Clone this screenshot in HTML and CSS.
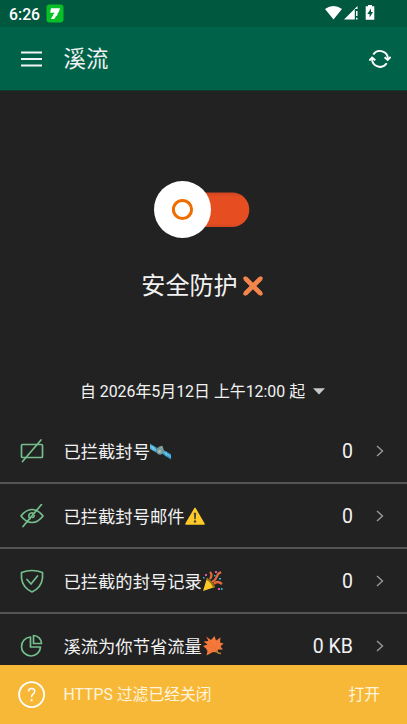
FILE: index.html
```
<!DOCTYPE html>
<html lang="zh-CN">
<head>
<meta charset="utf-8">
<title>溪流</title>
<link rel="stylesheet" href="styles.css">
</head>
<body>
<div class="app">
  <div class="status">
    <span class="clock">6:26</span>
    <svg class="badge" width="18" height="19" viewBox="0 0 18 19"><rect x=".5" y=".5" width="17" height="18" rx="3" fill="#08bf27"/><path d="M5 4.300H14L13.200 7L8.300 15H4.800L8.600 8.800H4.200Z" fill="#fff"/><path d="M7.600 10h4l-.6 1.800H6.800z" fill="#fff"/></svg>
    <svg class="sys" width="52" height="17" viewBox="0 0 52 17"><path d="M0 4Q8.500 -2 17 4L8.500 14.500Z" fill="#fff"/><path d="M32.500 1V4H29.800V14.500H19Z" fill="#fff"/><path d="M31 6h1.500v5H31zM31 12.700h1.500v1.800H31z" fill="#fff"/><path d="M43 1.300V0h4v1.300h2.300V14.700H40.700V1.300Z" fill="#fff"/><path d="M46 3.500L42.300 9H44.600V12.500L48 7H46Z" fill="#00583f"/></svg>
  </div>
  <header class="bar">
    <svg class="menu" width="21" height="16" viewBox="0 0 21 16"><path d="M0 1.500H21M0 8H21M0 14.500H21" stroke="#f2f5f3" stroke-width="2.200"/></svg>
    <h1>溪流</h1>
    <svg class="sync" width="22" height="20" viewBox="0 0 22 20" fill="none" stroke="#fff" stroke-width="1.900"><path d="M4.300 5.500A8 8 0 0 1 18.900 10.200M17.700 14.300A8 8 0 0 1 3.100 9.400"/><path d="M15.600 8.200L18.700 11L21.700 8M.3 11.500L3.100 8.500L6.300 11.200"/></svg>
  </header>
  <main>
    <section class="hero">
      <svg class="toggle" width="98" height="60" viewBox="0 0 98 60">
        <defs><linearGradient id="track" x1="0" y1="0" x2="0" y2="1"><stop offset="0" stop-color="#cf4520"/><stop offset=".13" stop-color="#e64e22"/><stop offset=".9" stop-color="#e64e22"/><stop offset="1" stop-color="#d24820"/></linearGradient></defs>
        <rect x="25" y="13.500" width="71.300" height="34.500" rx="17.200" fill="url(#track)"/>
        <circle cx="29.500" cy="30.500" r="28.500" fill="#fff"/><circle cx="29.500" cy="30.500" r="9.100" fill="none" stroke="#ef6c00" stroke-width="3"/>
      </svg>
      <div class="state"><span>安全防护</span><svg width="22" height="22" viewBox="0 0 22 22"><path d="M3.300 3.300L18.700 18.700M18.700 3.300L3.300 18.700" stroke="#f4854b" stroke-width="4.600"/><path d="M3.300 3.300L18.700 18.700M18.700 3.300L3.300 18.700" stroke="#f4854b" stroke-width="4" stroke-linecap="round"/></svg></div>
    </section>
    <div class="since"><span>自 2026年5月12日 上午12:00 起</span><svg width="12" height="7" viewBox="0 0 12 7"><path d="M0 .3H12L6 6.500Z" fill="#c8c8c8"/></svg></div>
    <div class="rows">
      <div class="row">
        <svg class="icon" width="24" height="24" viewBox="0 0 24 24"><rect x="1.500" y="5.500" width="21" height="13" rx="1"/><path d="M21 1L2.500 22.500"/></svg>
        <span class="label">已拦截封号</span>
        <svg class="emoji" width="21" height="21" viewBox="0 0 22 22"><path d="M0 3L7 7L6.500 12L0 8.500Z" fill="#4aaedb"/><path d="M14 9.500L22 14V19.500L13.500 14Z" fill="#34a1d1"/><path d="M0 5.500L7 9.500M14 11.500L22 16.500M3 5L3.500 10M17 11V16" stroke="#a5dff2" stroke-width=".6"/><circle cx="10.500" cy="10.300" r="4" fill="#719d9e"/><path d="M9 6L13 5L14 9" fill="#8fa596"/><circle cx="10" cy="11" r="1.500" fill="#a7c2b9"/></svg>
        <span class="value">0</span><svg class="chev" width="8" height="12" viewBox="0 0 8 12"><path d="M1 1L6.500 6L1 11"/></svg>
      </div>
      <div class="row">
        <svg class="icon" width="24" height="24" viewBox="0 0 24 24"><path d="M1 12Q6 5.500 12 5.500Q18 5.500 23 12Q18 18.500 12 18.500Q6 18.500 1 12Z"/><path d="M10.200 14.500A3 3 0 1 1 13.500 9.400M12.300 13.500Q14 13.500 14.200 11.500"/><path d="M21.500 .5L3 22.500"/></svg>
        <span class="label">已拦截封号邮件</span>
        <svg class="emoji gap" width="20" height="22" viewBox="0 0 20 22"><path d="M10 3.500L19 19H1Z" fill="#ffca28" stroke="#ffca28" stroke-width="1.500" stroke-linejoin="round"/><path d="M8.800 7.800h2.400l-.5 6.500H9.300z" fill="#4b453b"/><circle cx="10" cy="16.500" r="1.300" fill="#4b453b"/></svg>
        <span class="value">0</span><svg class="chev" width="8" height="12" viewBox="0 0 8 12"><path d="M1 1L6.500 6L1 11"/></svg>
      </div>
      <div class="row">
        <svg class="icon" width="24" height="24" viewBox="0 0 24 24"><path d="M1.500 3.500Q12 -.5 22.500 3.500V9Q21.500 18.500 12 23Q2.500 18.500 1.500 9Z"/><path d="M7 10.500L11 15L17.500 7"/></svg>
        <span class="label">已拦截的封号记录</span>
        <svg class="emoji" width="21" height="22" viewBox="0 0 21 22"><path d="M5 8L13 17L1 21Z" fill="#ffca28"/><path d="M5 8Q10 10 13 17L11 18Q9 12 4.500 10Z" fill="#9e740d"/><path d="M8 9Q11 5 8 2M10 12Q14 10 16 4L19 2M12 14Q15 10 20 14" fill="none" stroke="#df6b3d" stroke-width="2.300"/><path d="M3 4h2v2H3zM13 1h2v2h-2zM16 18h2v2h-2z" fill="#df5b9e"/><path d="M1 7h1.500v1.500H1zM17 8h2v1.500h-2zM19 18h1.500v2H19zM12 5h1.500v1.500H12z" fill="#2bb8dc"/></svg>
        <span class="value">0</span><svg class="chev" width="8" height="12" viewBox="0 0 8 12"><path d="M1 1L6.500 6L1 11"/></svg>
      </div>
      <div class="row">
        <svg class="icon" width="24" height="24" viewBox="0 0 24 24"><path d="M10.500 3A9.500 9.500 0 1 0 20.500 13H10.500Z"/><path d="M13.500 1.500A8 8 0 0 1 21.500 9.500H13.500Z"/></svg>
        <span class="label">溪流为你节省流量</span>
        <svg class="emoji gap" width="21" height="22" viewBox="0 0 21 22"><path d="M3 1.500L8 5L11.500 1L13 5.500L17.500 2.500L17 7.500L20.500 8.500L17.500 11.500L20 14.500L15 14.500L14.500 17.500L10 17L3.500 20.500L4.500 16L3 13.500L0 11L4.500 9.500L.5 6.500L5.500 6Z" fill="#f4793b"/><path d="M5 5L13 13.500M15 5.500L13 13.500M3 11L13 13.500M5.500 17.500L13 13.500" fill="none" stroke="#e96f35" stroke-width=".6"/><path d="M13 15Q14 18.500 18 18.500" fill="none" stroke="#b98228" stroke-width="1.400"/></svg>
        <span class="value">0 KB</span><svg class="chev" width="8" height="12" viewBox="0 0 8 12"><path d="M1 1L6.500 6L1 11"/></svg>
      </div>
    </div>
  </main>
  <footer class="notice">
    <svg width="28" height="28" viewBox="0 0 28 28" fill="none" stroke="#fff" stroke-width="1.800"><circle cx="13.600" cy="13.600" r="12.500"/><path d="M10.500 10.600Q10.600 7.600 13.600 7.600Q16.700 7.600 16.700 10.300Q16.700 11.900 15 13.200Q13.600 14.300 13.600 16.200" stroke-width="1.500"/><path d="M13.600 18.200V20.200"/></svg>
    <span class="message">HTTPS 过滤已经关闭</span>
    <span class="open">打开</span>
  </footer>
</div>
</body>
</html>
```
FILE: styles.css
```
* { box-sizing: border-box; }
body { margin: 0; background: #222; color: #f2f2f2; font-family: Roboto, "Noto Sans CJK SC", sans-serif; }
svg { display: block; flex: none; }
span, h1 { white-space: nowrap; }
.app { width: 407px; height: 724px; display: flex; flex-direction: column; overflow: hidden; }
.status { height: 27px; flex: none; display: flex; align-items: center; padding: 0 30px 0 9px; background: #00583f; }
.clock { width: 37px; font-size: 15.8px; font-weight: 500; line-height: 27px; color: #fff; padding-top: 1px; }
.sys { margin-left: auto; }
.bar { height: 64px; flex: none; display: flex; align-items: center; padding: 0 16px 0 21px; background: #006349; border-bottom: 1px solid #0b3c2f; }
h1 { margin: 1px 0 0 21.500px; font-size: 22.4px; font-weight: 400; line-height: 32px; }
.sync { margin-left: auto; }
main { flex: 1; min-height: 0; overflow: hidden; }
.hero { height: 280px; padding-top: 88px; display: flex; flex-direction: column; align-items: center; }
.toggle { margin-right: 4px; }
.state { display: flex; align-items: center; gap: 4px; margin: 29px 2px 0 0; font-size: 24.1px; line-height: 36px; }
.since { height: 48px; display: flex; align-items: center; justify-content: center; gap: 8px; padding: 0 2px 7px 0; font-size: 15.9px; line-height: 24px; }
.row { height: 65px; display: flex; align-items: center; padding: 1px 23px 0 19.500px; border-bottom: 2px solid #555; }
.icon { margin-right: 20px; fill: none; stroke: #74bf8b; stroke-width: 1.700; stroke-linejoin: round; stroke-linecap: round; }
.label { font-size: 17.3px; line-height: 26px; padding-top: 1px; }
.gap { margin-left: 1px; }
.value { margin-left: auto; font-size: 19.5px; line-height: 26px; padding-top: 2px; }
.chev { margin-left: 23px; fill: none; stroke: #999; stroke-width: 1.400; }
.notice { height: 59px; flex: none; display: flex; align-items: center; padding: 0 27px 0 18px; background: #f8b837; color: #fff5df; font-size: 15.8px; line-height: 24px; }
.message { margin-left: 17.500px; padding-top: 1px; }
.open { margin-left: auto; padding-top: 1px; }
```
